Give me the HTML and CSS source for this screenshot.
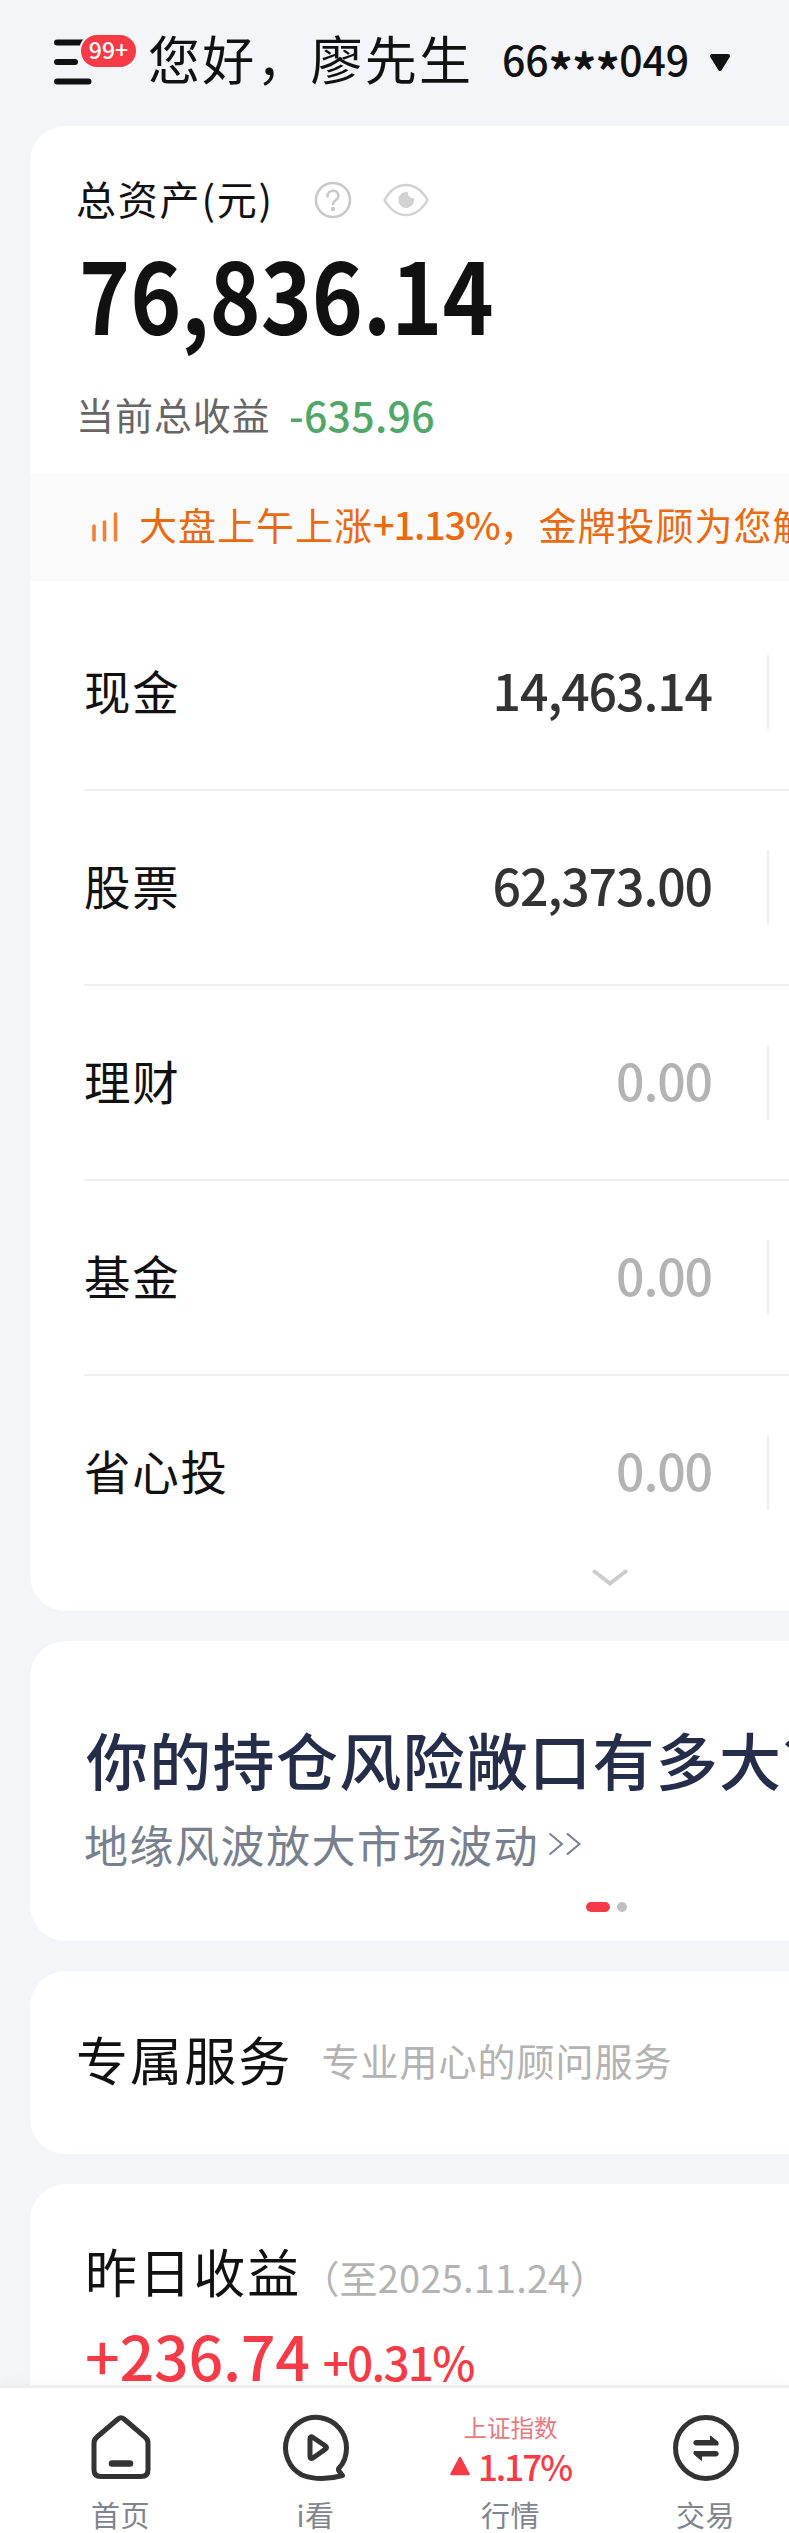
FILE: index.html
```html
<!DOCTYPE html>
<html lang="zh-CN">
<head>
<meta charset="utf-8">
<title>我的资产</title>
<link rel="stylesheet" href="styles.css">
</head>
<body>
<header class="header">
  <div class="menu">
    <svg class="menu-icon" width="38" height="46" viewBox="0 0 38 46"><path d="M3 3.500H30M3 23H21M3 42.500H34.500" stroke="#111" stroke-width="6" stroke-linecap="round"/></svg>
    <span class="badge">99+</span>
  </div>
  <h1 class="greeting">您好，廖先生</h1>
  <span class="account">66<span class="stars">***</span>049</span>
  <svg class="caret" width="22" height="18" viewBox="0 0 22 18"><path d="M3 2H19L11 15Z" fill="#111" stroke="#111" stroke-width="4" stroke-linejoin="round"/></svg>
</header>

<main>
  <section class="card assets">
    <div class="total-label">
      <span class="total-name">总资产(元)</span>
      <svg class="help" width="38" height="38" viewBox="0 0 38 38" fill="none" stroke="#c8c8c8" stroke-width="2.500" stroke-linecap="round"><circle cx="19" cy="19" r="17"/><path d="M13.500 15.500C13.500 8 24.500 8 24.500 15C24.500 19 19 19 19 23"/><circle cx="19" cy="28" r="1" fill="#c8c8c8"/></svg>
      <svg class="eye" width="46" height="34" viewBox="0 0 46 34"><path d="M1.500 17Q10 2 23 2T44.500 17Q36 32 23 32T1.500 17Z" fill="none" stroke="#d2d2d2" stroke-width="2.500"/><path d="M25 9.200A8 8 0 1 0 31 15A5 5 0 0 1 25 9.200Z" fill="#d2d2d2"/></svg>
    </div>
    <div class="total"><span class="total-value">76,836.14</span></div>
    <div class="profit"><span class="profit-label">当前总收益</span><span class="profit-value">-635.96</span></div>
    <div class="notice">
      <svg width="26" height="30" viewBox="0 0 26 30"><path d="M2 14V28M12.500 10V28M23.500 2V28" stroke="#f08235" stroke-width="3.600" stroke-linecap="round"/></svg>
      <span class="notice-text">大盘上午上涨<b class="rise">+1.13%</b>，金牌投顾为您解读</span>
    </div>
    <div class="rows">
      <div class="row"><span class="name">现金</span><span class="amount">14,463.14</span></div>
      <div class="row"><span class="name">股票</span><span class="amount">62,373.00</span></div>
      <div class="row"><span class="name">理财</span><span class="amount zero">0.00</span></div>
      <div class="row"><span class="name">基金</span><span class="amount zero">0.00</span></div>
      <div class="row"><span class="name">省心投</span><span class="amount zero">0.00</span></div>
    </div>
    <svg class="chevron" width="36" height="18" viewBox="0 0 36 18"><path d="M2.500 2.500L18 14.500L33.500 2.500" fill="none" stroke="#ccc" stroke-width="4" stroke-linecap="round"/></svg>
  </section>

  <section class="card banner">
    <h2 class="banner-title">你的持仓风险敞口有多大?</h2>
    <p class="banner-sub">地缘风波放大市场波动<svg width="34" height="22" viewBox="0 0 34 22"><path d="M1.500 .5L14 11L1.500 21.500M19 .5L31.500 11L19 21.500" fill="none" stroke="#78808f" stroke-width="2"/></svg></p>
    <div class="dots"><i class="dot active"></i><i class="dot"></i></div>
  </section>

  <section class="card service">
    <h2 class="title">专属服务</h2><span class="hint">专业用心的顾问服务</span>
  </section>

  <section class="card yesterday">
    <div class="yesterday-head"><h2 class="title">昨日收益</h2><span class="date">（至2025.11.24）</span></div>
    <div class="yesterday-values"><span class="gain">+236.74</span><span class="rate">+0.31%</span></div>
  </section>
</main>

<nav class="tabbar">
  <a class="tab">
    <svg width="68" height="68" viewBox="0 0 68 68" fill="none" stroke="#333" stroke-width="5" stroke-linejoin="round" stroke-linecap="round"><path d="M31 5Q34 2.500 37 5L58 23Q61 25.500 61 29V56Q61 62.500 54 62.500H14Q7 62.500 7 56V29Q7 25.500 10 23Z"/><path d="M25 49.500H43" stroke-width="6.500"/></svg>
    <span class="tab-label">首页</span>
  </a>
  <a class="tab">
    <svg width="68" height="68" viewBox="0 0 68 68" fill="none" stroke="#333" stroke-width="5" stroke-linejoin="round" stroke-linecap="round"><path d="M57 54C62 49 64.500 42 64.500 34A30.500 30.500 0 1 0 20 61C33 66 48 65 60.500 61.500L57 57Q56 55.500 57 54Z"/><path d="M28 25Q28 21.500 31 23.500L43.500 32Q45.500 33.500 43.500 35L31 44Q28 45.500 28 42.500Z"/></svg>
    <span class="tab-label">i看</span>
  </a>
  <a class="tab">
    <span class="index">
      <span class="index-name">上证指数</span>
      <span class="index-value"><svg width="20" height="20" viewBox="0 0 20 20"><path d="M10 2L18.500 18H1.500Z" fill="#f53b47" stroke="#f53b47" stroke-width="2.500" stroke-linejoin="round"/></svg>1.17%</span>
    </span>
    <span class="tab-label">行情</span>
  </a>
  <a class="tab">
    <svg width="68" height="68" viewBox="0 0 68 68"><circle cx="34" cy="34" r="30.500" fill="none" stroke="#333" stroke-width="5"/><path d="M24 26.500H38.500V22L46 28V31H24A2 2 0 0 1 24 26.500ZM44 37.500H22V40L29.500 46.500V42H44A2 2 0 0 0 44 37.500Z" fill="#333" stroke="#333" stroke-linejoin="round"/></svg>
    <span class="tab-label">交易</span>
  </a>
</nav>
</body>
</html>
```
FILE: styles.css
```css
* { box-sizing: border-box; }
html, body { margin: 0; height: 2533px; overflow: hidden; }
body {
  display: flex;
  flex-direction: column;
  width: 789px;
  background: #f3f5f9;
  color: #111;
  font-family: "Noto Sans CJK SC", "Noto Sans", sans-serif;
  white-space: nowrap;
}
h1, h2, p { margin: 0; font-weight: 400; }
svg { display: block; flex: none; }

.header { display: flex; align-items: center; height: 126px; padding: 0 0 10px 54px; flex: none; }
.menu { position: relative; width: 94px; height: 46px; margin-top: 7px; }
.badge {
  position: absolute;
  left: 27px;
  top: -4px;
  width: 55px;
  height: 32px;
  border-radius: 16px;
  background: #f83a46;
  color: #fff;
  font-size: 23px;
  font-weight: 500;
  line-height: 29px;
  text-align: center;
  box-shadow: 0 0 0 2px #f3f5f9;
}
.greeting { font-size: 52px; letter-spacing: 2.200px; line-height: 110px; width: 354px; }
.account { font-size: 41px; font-weight: 500; letter-spacing: -.1px; line-height: 114px; width: 207px; }
.stars { display: inline-block; font-size: 48px; font-weight: 700; letter-spacing: -.8px; line-height: 40px; vertical-align: -14px; }
.caret { margin-top: 9px; }

main { flex: 1; min-height: 0; overflow: hidden; padding-left: 30px; }
.card { background: #fff; border-radius: 36px 0 0 36px; overflow: hidden; }

.assets { height: 1485px; display: flex; flex-direction: column; }
.total-label { display: flex; align-items: center; height: 60px; margin-top: 44px; padding-left: 46px; }
.total-name { font-size: 40px; letter-spacing: 1.800px; width: 238px; line-height: 56px; padding-bottom: 4px; }
.eye { margin-left: 31px; }
.total { height: 156px; padding: 10px 0 0 49px; }
.total-value { display: inline-block; font-size: 98px; font-weight: 700; line-height: 104px; transform: scaleX(.885); transform-origin: 0 50%; }
.profit { display: flex; align-items: center; height: 60px; padding-left: 46px; margin-bottom: 27px; }
.profit-label { font-size: 38px; letter-spacing: .9px; color: #666; width: 213px; line-height: 56px; padding-bottom: 5px; }
.profit-value { font-size: 41px; font-weight: 500; letter-spacing: .3px; color: #51a768; line-height: 57px; padding-bottom: 3px; }
.notice { display: flex; align-items: center; height: 108px; padding-left: 62px; background: #fafafa; color: #e96a10; flex: none; }
.notice-text { font-size: 38px; letter-spacing: 1px; margin-left: 21px; line-height: 60px; padding-bottom: 7px; }
.rise { font-weight: 500; letter-spacing: -1.200px; }
.rows { padding: 15px 0 0 54px; }
.row { display: flex; align-items: center; height: 195px; border-bottom: 2px solid #eee; }
.row:last-child { border-color: transparent; }
.name { font-size: 46.500px; letter-spacing: 1.800px; flex: 1; line-height: 70px; padding: 0 0 6px 0; }
.amount { height: 75px; font-size: 50px; font-weight: 500; letter-spacing: -1.100px; color: #333; line-height: 69px; padding-right: 55px; margin-right: 20px; border-right: 2px solid #eee; }
.zero { color: #b3b3b3; }
.chevron { margin: -2px 0 0 562px; }

.banner { height: 300px; margin-top: 30px; padding: 71px 0 0 56px; }
.banner-title { font-size: 62px; font-weight: 500; letter-spacing: 1.300px; line-height: 94px; color: #252d4b; }
.banner-sub { display: flex; align-items: center; gap: 9px; margin-left: -2px; font-size: 44px; letter-spacing: 1.500px; line-height: 76px; color: #78808f; }
.dots { display: flex; gap: 7px; margin: 20px 0 0 500px; }
.dot { width: 10px; height: 10px; border-radius: 5px; background: #c0c0c0; }
.dot.active { width: 24px; background: #f53b47; }

.title { font-size: 52px; letter-spacing: 2.100px; line-height: 76px; }
.service { display: flex; align-items: center; height: 183px; margin-top: 30px; padding: 0 0 7px 46px; }
.hint { font-size: 38px; letter-spacing: 1px; color: #b3b3b3; margin-left: 29px; }
.yesterday { height: 400px; margin-top: 30px; padding: 49px 0 0 55px; }
.yesterday-head { display: flex; align-items: center; height: 76px; }
.date { font-size: 38px; letter-spacing: .2px; color: #b3b3b3; padding-top: 11px; }
.yesterday-values { display: flex; align-items: baseline; color: #f53b47; font-weight: 500; line-height: 90px; padding-top: 1px; }
.gain { font-size: 61px; letter-spacing: -.3px; }
.rate { font-size: 46px; letter-spacing: -1.800px; margin-left: 13px; }

.tabbar { display: flex; height: 148px; flex: none; padding-left: 23px; border-top: 3px solid #eee; background: #fff; box-shadow: 0 0 16px rgba(0, 0, 0, .04); position: relative; }
.tab { width: 195px; flex: none; display: flex; flex-direction: column; align-items: center; padding-top: 26px; }
.tab-label { font-size: 29px; letter-spacing: .6px; line-height: 40px; margin-top: 12px; color: #7f858e; }
.index { display: flex; flex-direction: column; align-items: center; height: 68px; }
.index-name { font-size: 23.500px; line-height: 26px; color: #e8787e; }
.index-value { display: flex; align-items: center; gap: 8px; font-size: 35px; font-weight: 500; letter-spacing: -2px; line-height: 44px; padding-top: 4px; height: 48px; color: #f53b47; }
```
